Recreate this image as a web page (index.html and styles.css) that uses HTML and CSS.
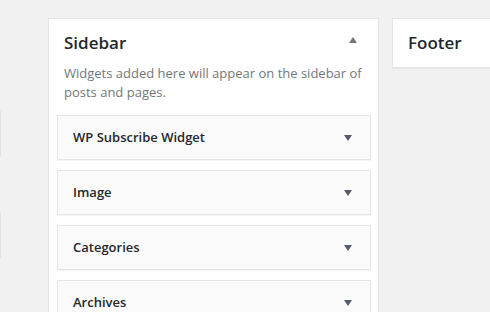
FILE: index.html
```html
<!DOCTYPE html>
<html>
<head>
<meta charset="utf-8">
<link rel="stylesheet" href="styles.css">
</head>
<body>
<div class="page">
  <div class="left-col">
    <div class="stub stub-a"></div>
    <div class="stub stub-b"></div>
  </div>
  <section class="area sidebar">
    <div class="area-head">
      <h2>Sidebar</h2>
      <span class="tri tri-up"></span>
    </div>
    <p class="desc">Widgets added here will appear on the sidebar of posts and pages.</p>
    <div class="widgets">
      <div class="widget"><h3>WP Subscribe Widget</h3><span class="tri tri-down"></span></div>
      <div class="widget"><h3>Image</h3><span class="tri tri-down"></span></div>
      <div class="widget"><h3>Categories</h3><span class="tri tri-down"></span></div>
      <div class="widget"><h3>Archives</h3><span class="tri tri-down"></span></div>
    </div>
  </section>
  <section class="area footer">
    <div class="area-head">
      <h2>Footer</h2>
    </div>
  </section>
</div>
</body>
</html>
```

FILE: styles.css
```css
html, body {
  margin: 0;
  padding: 0;
  background: #f1f1f1;
  font-family: "Open Sans", "Liberation Sans", sans-serif;
  overflow: hidden;
  height: 312px;
}
.page {
  display: flex;
  align-items: flex-start;
  padding-top: 18px;
}
.left-col {
  width: 1px;
  display: flex;
  flex-direction: column;
  margin-right: 47px;
}
.stub {
  width: 1px;
  height: 46px;
  background: #e2e2e2;
}
.stub-a { margin-top: 93px; }
.stub-b { margin-top: 55px; }
.area {
  background: #fff;
  border: 1px solid #e5e5e5;
  box-shadow: 0 1px 1px rgba(0,0,0,.04);
  box-sizing: border-box;
}
.sidebar {
  width: 331px;
  height: 320px;
  margin-right: 13px;
}
.footer {
  flex: 1;
  margin-right: -20px;
}
.area-head {
  display: flex;
  align-items: flex-start;
  justify-content: space-between;
  padding: 9px 21px 7px 15px;
}
.footer .area-head {
  padding-bottom: 10px;
}
.area-head h2 {
  margin: 0;
  font-size: 17px;
  line-height: 29px;
  font-weight: 600;
  color: #23282d;
}
.desc {
  margin: 0;
  padding: 0 15px;
  font-size: 13px;
  line-height: 19px;
  color: #72777c;
}
.widgets {
  padding: 13px 7px 0 8px;
  display: flex;
  flex-direction: column;
  gap: 10px;
}
.widget {
  background: #fafafa;
  border: 1px solid #e5e5e5;
  box-shadow: 0 1px 1px rgba(0,0,0,.04);
  display: flex;
  align-items: center;
  justify-content: space-between;
  padding: 0 18px 0 15px;
  height: 45px;
  box-sizing: border-box;
}
.widget h3 {
  margin: 0;
  font-size: 13px;
  line-height: 13px;
  font-weight: 600;
  color: #23282d;
}
.tri {
  width: 0;
  height: 0;
  border-left: 4px solid transparent;
  border-right: 4px solid transparent;
}
.tri-up {
  margin-top: 9px;
  border-bottom: 6px solid #72777c;
}
.tri-down {
  margin-top: 1px;
  border-top: 6px solid #555d66;
}
```
